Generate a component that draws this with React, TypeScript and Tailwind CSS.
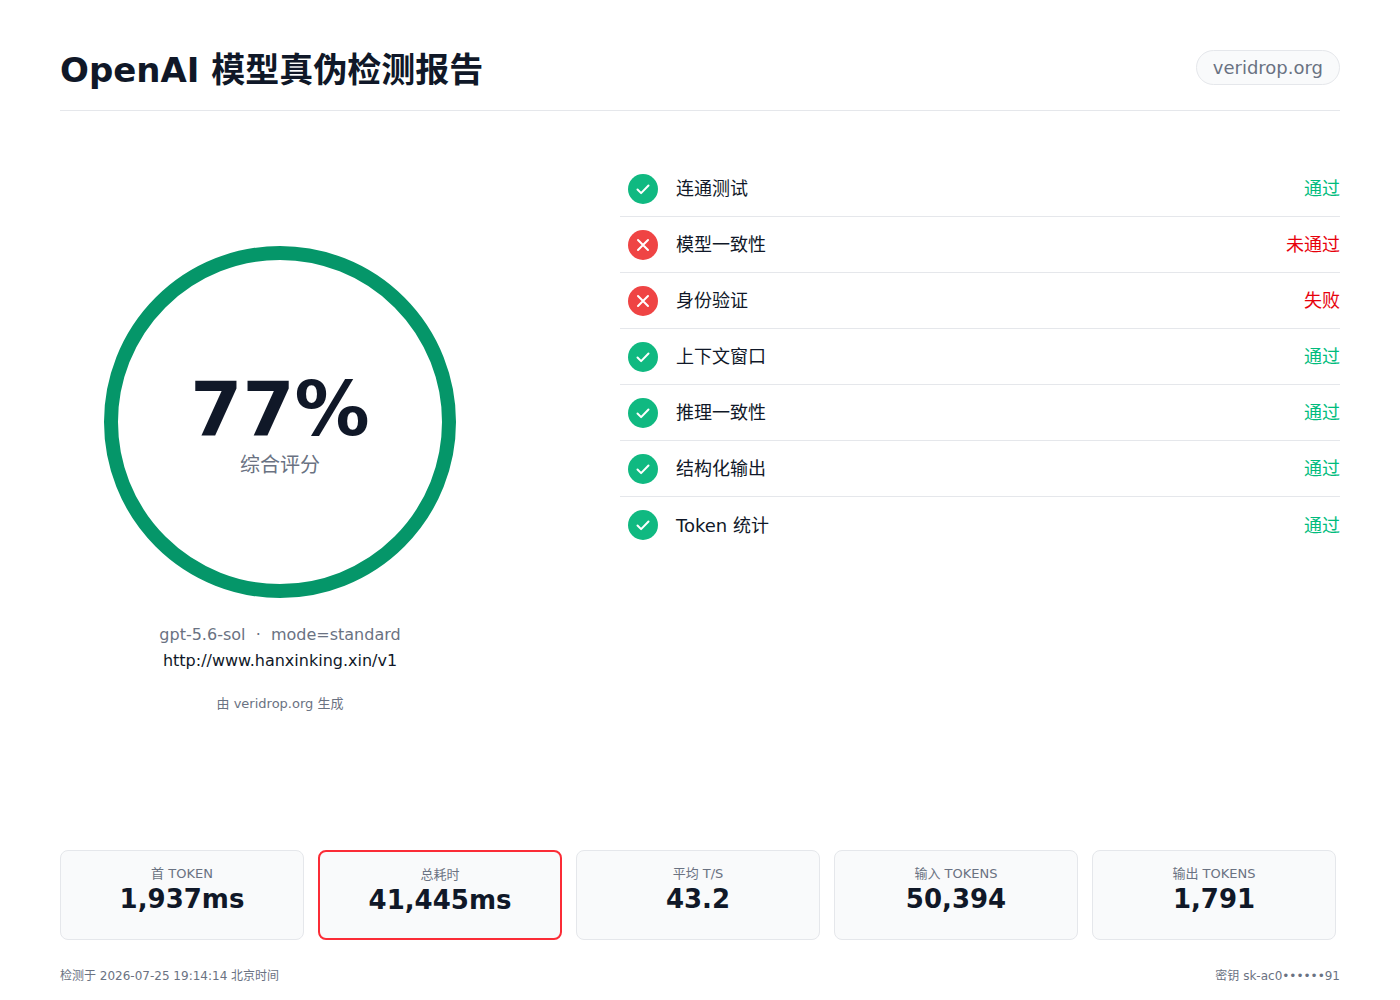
import React from "react";

interface CheckItem {
  name: string;
  result: string;
  passed: boolean;
}

interface Stat {
  label: string;
  value: string;
  alert?: boolean;
}

const checks: CheckItem[] = [
  { name: "连通测试", result: "通过", passed: true },
  { name: "模型一致性", result: "未通过", passed: false },
  { name: "身份验证", result: "失败", passed: false },
  { name: "上下文窗口", result: "通过", passed: true },
  { name: "推理一致性", result: "通过", passed: true },
  { name: "结构化输出", result: "通过", passed: true },
  { name: "Token 统计", result: "通过", passed: true },
];

const stats: Stat[] = [
  { label: "首 TOKEN", value: "1,937ms" },
  { label: "总耗时", value: "41,445ms", alert: true },
  { label: "平均 T/S", value: "43.2" },
  { label: "输入 TOKENS", value: "50,394" },
  { label: "输出 TOKENS", value: "1,791" },
];

const StatusIcon = ({ passed }: { passed: boolean }) => (
  <svg width="30" height="30" viewBox="0 0 30 30" className="shrink-0">
    <circle cx="15" cy="15" r="15" fill={passed ? "#10b981" : "#ef4444"} />
    {passed ? (
      <path
        d="M9.5 15.5l3.6 3.6 7.4-7.6"
        fill="none"
        stroke="#fff"
        strokeWidth="2"
        strokeLinecap="round"
        strokeLinejoin="round"
      />
    ) : (
      <path
        d="M10 10l10 10M20 10L10 20"
        fill="none"
        stroke="#fff"
        strokeWidth="2"
        strokeLinecap="round"
      />
    )}
  </svg>
);

const ScoreRing = ({ score }: { score: number }) => (
  <div className="relative w-[352px] h-[352px]">
    <svg width="352" height="352" viewBox="0 0 352 352">
      <circle cx="176" cy="176" r="169" fill="none" stroke="#059669" strokeWidth="14" />
    </svg>
    <div className="absolute inset-0 flex flex-col items-center justify-center pt-[6px]">
      <div className="text-[75px] leading-none font-bold text-gray-900">{score}%</div>
      <div className="mt-1 text-[20px] leading-7 text-gray-500">综合评分</div>
    </div>
  </div>
);

export default function App() {
  return (
    <div className="min-h-screen flex flex-col bg-white px-[60px] pt-[50px] pb-4 font-['DejaVu_Sans','Noto_Sans_CJK_SC',sans-serif] text-gray-900">
      <div className="flex items-start justify-between pb-5 border-b border-gray-200">
        <h1 className="text-[34px] leading-10 font-bold text-gray-900">OpenAI 模型真伪检测报告</h1>
        <div className="h-[35px] px-4 flex items-center rounded-full border border-gray-200 bg-gray-50 text-[18px] text-gray-500">
          veridrop.org
        </div>
      </div>

      <div className="flex-1 flex gap-[120px] mt-[50px]">
        <div className="w-[440px] flex flex-col items-center">
          <div className="mt-[85px]">
            <ScoreRing score={77} />
          </div>
          <div className="mt-[24px] text-[16px] leading-[26px] text-gray-500">
            gpt-5.6-sol &nbsp;·&nbsp; mode=standard
          </div>
          <div className="text-[16px] leading-[26px] text-gray-900">http://www.hanxinking.xin/v1</div>
          <div className="mt-[20px] text-[13px] leading-5 text-gray-500">由 veridrop.org 生成</div>
        </div>

        <div className="flex-1">
          {checks.map((item, i) => (
            <div
              key={item.name}
              className={`h-14 flex items-center pl-2 ${i < checks.length - 1 ? "border-b border-gray-200" : ""}`}
            >
              <StatusIcon passed={item.passed} />
              <span className="ml-[18px] text-[18px] text-gray-900">{item.name}</span>
              <span
                className={`ml-auto text-[18px] ${item.passed ? "text-emerald-500" : "text-red-600"}`}
              >
                {item.result}
              </span>
            </div>
          ))}
        </div>
      </div>

      <div className="w-[1276px] grid grid-cols-5 gap-[14px]">
        {stats.map((s) => (
          <div
            key={s.label}
            className={`h-[90px] rounded-lg bg-gray-50 flex flex-col items-center pt-[14px] ${s.alert ? "border-2 border-red-500" : "border border-gray-200"}`}
          >
            <div className="text-[13px] leading-[18px] text-gray-500">{s.label}</div>
            <div className="text-[26px] leading-8 font-bold text-gray-900">{s.value}</div>
          </div>
        ))}
      </div>

      <div className="mt-7 flex justify-between text-[12px] leading-4 text-gray-500">
        <span>检测于 2026-07-25 19:14:14 北京时间</span>
        <span>密钥 sk-ac0••••••91</span>
      </div>
    </div>
  );
}
